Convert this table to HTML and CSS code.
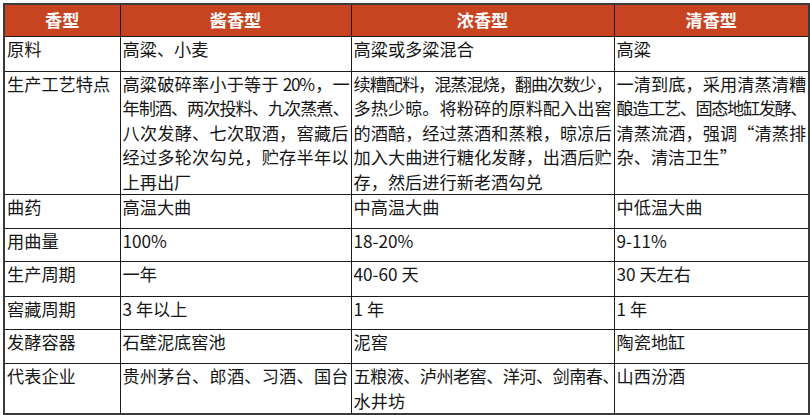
FILE: index.html
```html
<!DOCTYPE html>
<html lang="zh-CN">
<head>
<meta charset="utf-8">
<title>白酒香型对比</title>
<link rel="stylesheet" href="styles.css">
</head>
<body>
<table class="cmp">
  <colgroup>
    <col class="c1"><col class="c2"><col class="c3"><col class="c4">
  </colgroup>
  <thead>
    <tr class="hd"><th>香型</th><th>酱香型</th><th>浓香型</th><th>清香型</th></tr>
  </thead>
  <tbody>
    <tr class="r35"><td>原料</td><td>高粱、小麦</td><td>高粱或多粱混合</td><td>高粱</td></tr>
    <tr class="r123">
      <td>生产工艺特点</td>
      <td>
        <span class="ln t13">高粱破碎率小于等于 20%，一</span>
        <span class="ln t12">年制酒、两次投料、九次蒸煮、</span>
        <span class="ln">八次发酵、七次取酒，窖藏后</span>
        <span class="ln">经过多轮次勾兑，贮存半年以</span>
        <span class="end">上再出厂</span>
      </td>
      <td>
        <span class="ln t12">续糟配料，混蒸混烧，翻曲次数少，</span>
        <span class="ln t02">多热少晾。将粉碎的原料配入出窖</span>
        <span class="ln t02">的酒醅，经过蒸酒和蒸粮，晾凉后</span>
        <span class="ln t02">加入大曲进行糖化发酵，出酒后贮</span>
        <span class="end">存，然后进行新老酒勾兑</span>
      </td>
      <td>
        <span class="ln t02">一清到底，采用清蒸清糟</span>
        <span class="ln t15">酿造工艺、固态地缸发酵、</span>
        <span class="ln t02">清蒸流酒，强调“清蒸排</span>
        <span class="end">杂、清洁卫生”</span>
      </td>
    </tr>
    <tr class="r34"><td>曲药</td><td>高温大曲</td><td>中高温大曲</td><td>中低温大曲</td></tr>
    <tr class="r33"><td>用曲量</td><td>100%</td><td>18-20%</td><td>9-11%</td></tr>
    <tr class="r35"><td>生产周期</td><td>一年</td><td>40-60 天</td><td>30 天左右</td></tr>
    <tr class="r33"><td>窖藏周期</td><td>3 年以上</td><td>1 年</td><td>1 年</td></tr>
    <tr class="r34"><td>发酵容器</td><td>石壁泥底窖池</td><td>泥窖</td><td>陶瓷地缸</td></tr>
    <tr class="r50">
      <td>代表企业</td>
      <td><span class="ln">贵州茅台、郎酒、习酒、国台</span></td>
      <td><span class="ln t06">五粮液、泸州老窖、洋河、剑南春、</span><span class="end">水井坊</span></td>
      <td>山西汾酒</td>
    </tr>
  </tbody>
</table>
</body>
</html>
```
FILE: styles.css
```css
html, body {
  margin: 0;
  padding: 0;
  background: #ffffff;
}

body {
  font-family: "Noto Sans CJK SC", "Noto Sans", sans-serif;
}

.cmp {
  border-collapse: collapse;
  table-layout: fixed;
  width: 805px;
  margin: 3px 0 0 3px;
  border: 2px solid #3a3a3a;
  color: #161616;
  font-size: 17.2px;
  line-height: 24.5px;
}

.c1 { width: 116px; }
.c2 { width: 231px; }
.c3 { width: 263px; }
.c4 { width: 195px; }

.cmp th,
.cmp td {
  border: 1px solid #1c1c1c;
  padding: 0 2px 0 2px;
  vertical-align: top;
  text-align: left;
  font-weight: 400;
  overflow: hidden;
}

.cmp th {
  background: #c8431f;
  color: #ffffff;
  font-weight: 700;
  text-align: center;
  vertical-align: middle;
  padding: 0;
}

.hd { height: 32px; }
.r33 { height: 33px; }
.r34 { height: 34px; }
.r35 { height: 35px; }
.r50 { height: 50px; }
.r123 { height: 123px; }

.ln {
  display: block;
  white-space: nowrap;
  text-align: justify;
  text-align-last: justify;
}

.end {
  display: block;
  white-space: nowrap;
}

.t02 { letter-spacing: -0.2px; }
.t06 { letter-spacing: -0.6px; }
.t12 { letter-spacing: -1.2px; }
.t13 { letter-spacing: -1.3px; }
.t15 { letter-spacing: -1.5px; }
```
